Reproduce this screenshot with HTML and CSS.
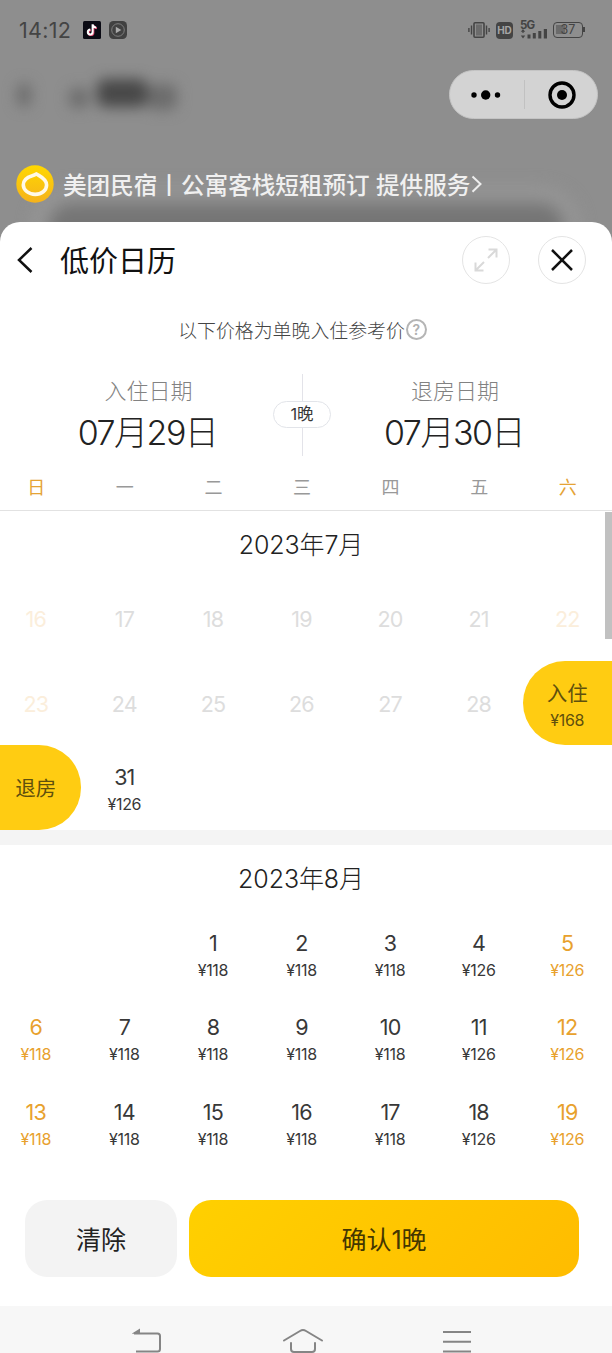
FILE: index.html
```html
<!DOCTYPE html>
<html lang="zh-CN">
<head>
    <meta charset="UTF-8">
    <title>低价日历</title>
    <link rel="stylesheet" href="styles.css">
</head>
<body>
    <div class="phone">
        <div class="backdrop">
            <div class="status-bar">
                <span class="clock">14:12</span>
                <svg class="app-icon" width="18" height="18" viewBox="0 0 18 18">
                    <rect width="18" height="18" rx="1.5" fill="#0b0b14"/>
                    <path d="M9.9 3.5v7.7a2.4 2.4 0 1 1-2.4-2.4M9.9 3.6c.3 1.9 1.6 3 3.6 3.1" fill="none" stroke="#d8426a" stroke-width="2" transform="translate(.5 .5)"/>
                    <path d="M9.6 3.3v7.7a2.4 2.4 0 1 1-2.4-2.4M9.6 3.4c.3 1.9 1.6 3 3.6 3.1" fill="none" stroke="#fff" stroke-width="2"/>
                </svg>
                <svg class="app-icon" width="18" height="18" viewBox="0 0 18 18">
                    <rect width="18" height="18" rx="4.5" fill="#414141"/>
                    <circle cx="9" cy="9" r="6.3" fill="none" stroke="#858585" stroke-width=".9"/>
                    <path d="M6.8 5.8l5.5 3.2-5.5 3.2z" fill="#aaa"/>
                </svg>
                <div class="status-right">
                    <svg width="22" height="18" viewBox="0 0 22 18" fill="none" stroke="#444">
                        <rect x="6" y="1.7" width="10" height="14.6" rx="1" stroke-width="1.6"/>
                        <rect x="8" y="3.5" width="6" height="11" fill="#6b6b6b" stroke="none"/>
                        <path d="M3.5 4.5v9M18.5 4.5v9M.9 7v4M21.1 7v4" stroke-width="1.4"/>
                    </svg>
                    <span class="hd">HD</span>
                    <span class="signal">
                        <span class="signal-type">5G</span>
                        <svg width="28" height="10" viewBox="0 0 28 10" fill="#444">
                            <path d="M.8 2.8L3 0l2.2 2.8zM.8 6.5h4.4L3 9.600zM2.4 2h1.200v2H2.400z"/>
                            <rect x="7.5" y="5.5" width="3" height="4"/>
                            <rect x="12.8" y="4" width="3" height="5.5"/>
                            <rect x="18.3" y="2" width="3" height="7.5"/>
                            <rect x="23.8" y="0" width="3.2" height="9.5"/>
                        </svg>
                    </span>
                    <span class="battery">37</span>
                </div>
            </div>

            <div class="nav">
                <div class="nav-title"><i class="smudge s1"></i><i class="smudge s2"></i><i class="smudge s3"></i><i class="smudge s4"></i></div>
                <div class="capsule">
                    <svg width="30" height="12" viewBox="0 0 30 12">
                        <circle cx="3" cy="6" r="2.7"/>
                        <circle cx="14.7" cy="6" r="4.7"/>
                        <circle cx="26.5" cy="6" r="2.7"/>
                    </svg>
                    <span class="capsule-line"></span>
                    <svg width="28" height="28" viewBox="0 0 28 28">
                        <circle cx="14" cy="14" r="12" fill="none" stroke="#000" stroke-width="3.4"/>
                        <circle cx="14" cy="14" r="5"/>
                    </svg>
                </div>
            </div>

            <div class="brand">
                <svg width="38" height="38" viewBox="0 0 38 38">
                    <defs>
                        <linearGradient id="logo" x1="0" y1="0" x2="0" y2="1">
                            <stop offset="0" stop-color="#ffd800"/>
                            <stop offset="1" stop-color="#f5b21c"/>
                        </linearGradient>
                    </defs>
                    <circle cx="19" cy="19" r="18.7" fill="url(#logo)"/>
                    <path d="M20.3 8.900C23 11 30.600 13.300 30.600 20c0 5.500-5.200 9.400-11.400 9.400S7.300 25.300 7.300 20c0-5.700 4.200-7.800 9-9.200 1.600-.5 2.800-1 4-1.900z" fill="none" stroke="#fff9e8" stroke-width="3.6" stroke-linejoin="round"/>
                </svg>
                <span class="brand-text">美团民宿丨公寓客栈短租预订 提供服务</span>
                <svg width="12" height="20" viewBox="0 0 12 20" fill="none" stroke="#eee" stroke-width="2">
                    <path d="M1.5 2.5L9.500 10l-8 7.800"/>
                </svg>
            </div>
        </div>

        <div class="sheet">
            <div class="sheet-header">
                <svg width="16" height="28" viewBox="0 0 16 28" fill="none" stroke="#111" stroke-width="2.5">
                    <path d="M14.5 2L2 14l12.500 12"/>
                </svg>
                <h1>低价日历</h1>
                <button class="round-btn">
                    <svg width="24" height="24" viewBox="0 0 24 24" fill="none" stroke="#d9d9d9" stroke-width="2">
                        <path d="M14 10l8.500-8.500M14.500 1.500h8v8M10 14l-8.500 8.500M1.500 14.500v8h8"/>
                    </svg>
                </button>
                <button class="round-btn">
                    <svg width="22" height="22" viewBox="0 0 22 22" fill="none" stroke="#111" stroke-width="2.5">
                        <path d="M1 1l20 20M21 1L1 21"/>
                    </svg>
                </button>
            </div>

            <div class="tip">以下价格为单晚入住参考价<span class="help">?</span></div>

            <div class="range">
                <div class="range-side">
                    <div class="range-label">入住日期</div>
                    <div class="range-date">07月29日</div>
                </div>
                <div class="nights"><span>1晚</span></div>
                <div class="range-side">
                    <div class="range-label">退房日期</div>
                    <div class="range-date">07月30日</div>
                </div>
            </div>

            <div class="weekdays grid">
                <span class="weekend">日</span><span>一</span><span>二</span><span>三</span><span>四</span><span>五</span><span class="weekend">六</span>
            </div>

            <div class="months">
                <div class="scrollbar"></div>
                <h2>2023年7月</h2>
                <div class="days grid">
                    <div class="day past weekend"><b>16</b></div>
                    <div class="day past"><b>17</b></div>
                    <div class="day past"><b>18</b></div>
                    <div class="day past"><b>19</b></div>
                    <div class="day past"><b>20</b></div>
                    <div class="day past"><b>21</b></div>
                    <div class="day past weekend"><b>22</b></div>

                    <div class="day past weekend"><b>23</b></div>
                    <div class="day past"><b>24</b></div>
                    <div class="day past"><b>25</b></div>
                    <div class="day past"><b>26</b></div>
                    <div class="day past"><b>27</b></div>
                    <div class="day past"><b>28</b></div>
                    <div class="day check-in"><b>入住</b><i>¥168</i></div>

                    <div class="day check-out"><b>退房</b></div>
                    <div class="day"><b>31</b><i>¥126</i></div>
                </div>

                <div class="divider"></div>

                <h2>2023年8月</h2>
                <div class="days grid">
                    <div class="day"></div>
                    <div class="day"></div>
                    <div class="day"><b>1</b><i>¥118</i></div>
                    <div class="day"><b>2</b><i>¥118</i></div>
                    <div class="day"><b>3</b><i>¥118</i></div>
                    <div class="day"><b>4</b><i>¥126</i></div>
                    <div class="day weekend"><b>5</b><i>¥126</i></div>

                    <div class="day weekend"><b>6</b><i>¥118</i></div>
                    <div class="day"><b>7</b><i>¥118</i></div>
                    <div class="day"><b>8</b><i>¥118</i></div>
                    <div class="day"><b>9</b><i>¥118</i></div>
                    <div class="day"><b>10</b><i>¥118</i></div>
                    <div class="day"><b>11</b><i>¥126</i></div>
                    <div class="day weekend"><b>12</b><i>¥126</i></div>

                    <div class="day weekend"><b>13</b><i>¥118</i></div>
                    <div class="day"><b>14</b><i>¥118</i></div>
                    <div class="day"><b>15</b><i>¥118</i></div>
                    <div class="day"><b>16</b><i>¥118</i></div>
                    <div class="day"><b>17</b><i>¥118</i></div>
                    <div class="day"><b>18</b><i>¥126</i></div>
                    <div class="day weekend"><b>19</b><i>¥126</i></div>
                </div>
            </div>

            <div class="actions">
                <button class="clear-btn">清除</button>
                <button class="confirm-btn">确认1晚</button>
            </div>
        </div>

        <div class="system-nav">
            <svg width="32" height="30" viewBox="0 0 32 30" fill="none" stroke="#858585" stroke-width="2">
                <path d="M2 5.500h23.500q2.500 0 2.500 2.500v13q0 2.500-2.500 2.500H4"/>
                <path d="M-.5 5.800L8 .5v5.300z" fill="#858585" stroke="none"/>
            </svg>
            <svg width="42" height="30" viewBox="0 0 42 30" fill="none" stroke="#858585" stroke-width="2" stroke-linecap="round">
                <path d="M2 12.500L18 3q3-1.800 6 0l16 9.500M9 15v6q0 3 3 3h18q3 0 3-3v-6"/>
            </svg>
            <svg width="30" height="30" viewBox="0 0 30 30" fill="none" stroke="#858585" stroke-width="2">
                <path d="M1 4h28M1 13.700h28M1 23.500h28"/>
            </svg>
        </div>
    </div>
</body>
</html>
```

FILE: styles.css
```css
* {
    box-sizing: border-box;
}
body {
    margin: 0;
    font-family: Inter, "Noto Sans CJK SC", sans-serif;
    color: #383838;
}
h1, h2 {
    margin: 0;
    font-weight: 400;
}
button {
    border: none;
    padding: 0;
    font-family: inherit;
}
svg {
    display: block;
    flex: none;
}
.phone {
    width: 612px;
    height: 1353px;
    overflow: hidden;
    display: flex;
    flex-direction: column;
    background: #8e8e8e;
}

/* dimmed page behind the sheet */
.backdrop {
    height: 221.5px;
    flex: none;
    position: relative;
    z-index: 0;
    overflow: hidden;
}
.backdrop::after {
    content: "";
    position: absolute;
    z-index: -1;
    left: 48px;
    right: 48px;
    top: 203px;
    height: 60px;
    border-radius: 24px;
    background: #757575;
    box-shadow: 0 0 0 16px #969696;
    filter: blur(8px);
}
.status-bar {
    height: 60px;
    padding: 0 27px 0 19px;
    display: flex;
    align-items: center;
    color: #444;
}
.clock {
    width: 64px;
    font-size: 21.5px;
    letter-spacing: 0.3px;
}
.app-icon {
    margin-right: 8px;
}
.status-right {
    margin-left: auto;
    display: flex;
    align-items: center;
}
.hd {
    width: 17px;
    height: 17px;
    margin: 0 7px 0 6px;
    border-radius: 4px;
    background: #444;
    color: #a5a5a5;
    font-size: 10px;
    line-height: 17px;
    font-weight: 700;
    text-align: center;
}
.signal {
    width: 28px;
    margin-right: 5px;
}
.signal-type {
    display: block;
    font-size: 11.5px;
    line-height: 8px;
    font-weight: 700;
    letter-spacing: -0.8px;
}
.battery {
    position: relative;
    width: 30px;
    height: 16px;
    margin-right: 2px;
    border: 1.5px solid #444;
    border-radius: 4px;
    font-size: 12.5px;
    line-height: 14px;
    text-align: center;
    background: linear-gradient(#6a6a6a, #6a6a6a) 2px 2px / 9px 9px no-repeat;
}
.battery::after {
    content: "";
    position: absolute;
    right: -3px;
    top: 4px;
    width: 2px;
    height: 5px;
    background: #444;
}
.nav {
    height: 69px;
    padding: 0 14px 0 12px;
    display: flex;
    align-items: center;
    justify-content: space-between;
}
.nav-title {
    display: flex;
    align-items: center;
    filter: blur(7px);
}
.smudge {
    height: 24px;
    border-radius: 8px;
    background: #6c6c6c;
}
.s1 {
    width: 14px;
    margin: 0 38px 0 5px;
}
.s2 {
    width: 20px;
    height: 20px;
    margin: 6px 8px 0 0;
}
.s3 {
    width: 50px;
    height: 28px;
    margin-bottom: 4px;
    background: #484848;
}
.s4 {
    width: 30px;
    height: 26px;
    margin-top: 4px;
}
.capsule {
    width: 149px;
    height: 49px;
    padding: 0 21px;
    border-radius: 25px;
    background: #d3d3d3;
    border: 1px solid #c4c4c4;
    display: flex;
    align-items: center;
    justify-content: space-between;
}
.capsule-line {
    width: 1px;
    height: 29px;
    background: #c1c1c1;
}
.brand {
    height: 110px;
    padding: 0 16px;
    display: flex;
    align-items: center;
}
.brand-text {
    margin: 0 1px 0 9px;
    padding-top: 3px;
    font-size: 23.6px;
    font-weight: 500;
    line-height: 38px;
    color: #f0f0f0;
    white-space: nowrap;
}

/* calendar sheet */
.sheet {
    height: 1084px;
    flex: none;
    background: #fff;
    border-radius: 20px 20px 0 0;
    overflow: hidden;
}
.sheet-header {
    height: 76px;
    padding: 0 26px 0 17px;
    display: flex;
    align-items: center;
}
.sheet-header h1 {
    margin: 0 auto 0 27px;
    padding-top: 4px;
    font-size: 29px;
    line-height: 40px;
    color: #111;
}
.round-btn {
    width: 48px;
    height: 48px;
    margin-left: 28px;
    border: 1px solid #e4e4e4;
    border-radius: 50%;
    background: #fff;
    display: flex;
    align-items: center;
    justify-content: center;
}
.tip {
    height: 63px;
    padding-right: 7px;
    display: flex;
    align-items: center;
    justify-content: center;
    font-size: 18.9px;
    font-weight: 300;
    color: #444;
}
.help {
    width: 21px;
    height: 21px;
    margin-left: 1px;
    border: 2px solid #b5b5b5;
    border-radius: 50%;
    font-size: 14px;
    line-height: 17px;
    font-weight: 600;
    text-align: center;
    color: #b0b0b0;
}
.range {
    height: 103px;
    display: grid;
    grid-template-columns: 273px 58px 1fr;
}
.range-side {
    padding: 14px 0 0 24px;
    text-align: center;
}
.range-side:last-child {
    padding: 14px 33px 0 0;
}
.range-label {
    font-size: 22px;
    line-height: 32px;
    font-weight: 300;
    color: #828282;
}
.range-date {
    margin-top: 5px;
    padding-right: 2px;
    font-size: 34px;
    line-height: 42px;
    font-weight: 300;
    letter-spacing: -1.5px;
    color: #222;
}
.nights {
    height: 82px;
    margin-top: 13px;
    display: flex;
    align-items: center;
    background: linear-gradient(#e3e3e9, #e3e3e9) 29px 0 / 1px 82px no-repeat;
}
.nights span {
    width: 58px;
    height: 27px;
    border: 1.5px solid #e2e4e9;
    border-radius: 14px;
    background: #fff;
    font-size: 16.5px;
    line-height: 25px;
    text-align: center;
}
.grid {
    width: 620px;
    margin-left: -8px;
    display: grid;
    grid-template-columns: repeat(7, 1fr);
}
.weekdays {
    height: 47px;
    border-bottom: 1px solid #e2e2e2;
    font-size: 18px;
    line-height: 48px;
    text-align: center;
    color: #999;
}
.weekdays .weekend {
    color: #e5a336;
}
.months {
    position: relative;
}
.months h2 {
    height: 65.5px;
    padding-right: 10px;
    font-size: 25px;
    line-height: 69px;
    font-weight: 300;
    letter-spacing: -0.1px;
    text-align: center;
    color: #222;
}
.scrollbar {
    position: absolute;
    top: 1px;
    right: 0;
    width: 7px;
    height: 127px;
    background: #c1c1c1;
}
.days {
    grid-auto-rows: 84.5px;
}
.day {
    display: flex;
    flex-direction: column;
    align-items: center;
    padding: 17px 1px 0 0;
}
.day b {
    font-size: 21.5px;
    font-weight: 400;
    line-height: 30px;
    letter-spacing: -0.8px;
}
.day i {
    font-size: 16px;
    font-style: normal;
    line-height: 25px;
    letter-spacing: -0.3px;
}
.day.weekend {
    color: #e8a12d;
}
.day.past {
    padding-top: 28px;
    color: #ddd;
}
.day.past.weekend {
    color: #fbeedb;
}
.check-in,
.check-out {
    background: #ffcc12;
    color: #5f500d;
}
.check-in {
    border-radius: 42px 0 0 42px;
    padding-top: 18px;
}
.check-out {
    border-radius: 0 42px 42px 0;
    padding-top: 29px;
}
.check-in b,
.check-out b {
    font-size: 20.5px;
    letter-spacing: 0;
}
.check-in i {
    margin-top: -1px;
}
.divider {
    height: 15.5px;
    background: #f4f4f4;
}
.actions {
    padding: 35.5px 33px 0 25px;
    display: flex;
    gap: 12px;
}
.actions button {
    height: 77px;
    border-radius: 22px;
    font-size: 25px;
}
.clear-btn {
    width: 152px;
    background: #f3f3f3;
    color: #222;
}
.confirm-btn {
    flex: 1;
    background: linear-gradient(135deg, #ffd000, #ffbc00);
    color: #443600;
}
.system-nav {
    height: 47.5px;
    flex: none;
    padding: 22.5px 140px 0 132px;
    display: flex;
    justify-content: space-between;
    align-items: flex-start;
    background: #f7f7f7;
    overflow: hidden;
}
```
